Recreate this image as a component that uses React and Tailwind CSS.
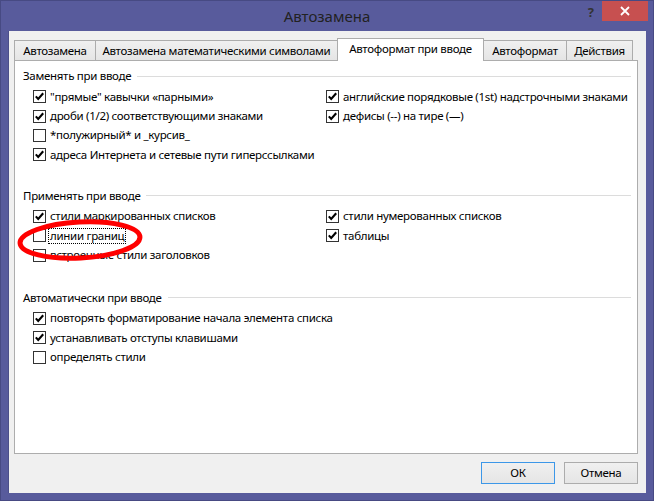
import React from "react";

const FONT = { fontFamily: '"Noto Sans", "Open Sans", sans-serif' };

function Box({ checked }) {
  return (
    <span className="w-[13px] h-[13px] border border-[#333333] bg-white flex items-center justify-center shrink-0">
      {checked && (
        <svg width="11" height="11" viewBox="0 0 11 11">
          <path d="M1.8 5.4 L4.2 8 L9.2 2.2" stroke="#000" strokeWidth="2.1" fill="none" />
        </svg>
      )}
    </span>
  );
}

function Item({ checked, label, focus }) {
  if (!label) return <div className="h-[19.4px]" />;
  return (
    <div className="h-[19.4px] flex items-center">
      <Box checked={checked} />
      <span
        className={
          "ml-[3px] leading-[14px] whitespace-nowrap " +
          (focus ? "outline-1 outline-dotted outline-[#000] outline-offset-[0px] px-px" : "px-px")
        }
      >
        {label}
      </span>
    </div>
  );
}

function Group({ title, rows, className }) {
  return (
    <div className={className}>
      <div className="flex items-center h-[16px]">
        <span className="whitespace-nowrap">{title}</span>
        <div className="flex-1 h-px bg-[#DCDCDC] ml-[6px]" />
      </div>
      <div className="mt-[3px] pl-[10px] grid grid-cols-[293px_1fr]">
        {rows.map((r, i) => (
          <React.Fragment key={i}>
            <Item {...r[0]} />
            <Item {...(r[1] || {})} />
          </React.Fragment>
        ))}
      </div>
    </div>
  );
}

const tabs = [
  { label: "Автозамена", w: "w-[82px]" },
  { label: "Автозамена математическими символами", w: "w-[243px]" },
  { label: "Автоформат при вводе", w: "w-[147px]", active: true },
  { label: "Автоформат", w: "w-[84px]" },
  { label: "Действия", w: "w-[67px]" },
];

export default function App() {
  return (
    <div
      className="w-[654px] h-[501px] bg-[#585B9C] border border-[#474A83] flex flex-col text-black overflow-hidden"
      style={FONT}
    >
      {/* Title bar */}
      <div className="h-[30px] grid grid-cols-[1fr_auto_1fr] items-start">
        <div />
        <div className="pt-[5px] text-[15px] leading-[20px] text-[#222222]">Автозамена</div>
        <div className="flex justify-end items-start pr-[5px]">
          <span className="mt-[3px] mr-[8px] text-[13px] font-bold leading-[16px] text-[#333333]">?</span>
          <div className="w-[46px] h-[20px] bg-[#C75050] flex items-center justify-center">
            <svg width="10" height="10" viewBox="0 0 10 10">
              <path d="M1 1 L9 9 M9 1 L1 9" stroke="#fff" strokeWidth="1.8" />
            </svg>
          </div>
        </div>
      </div>

      {/* Client area */}
      <div className="flex-1 mx-[7px] mb-[7px] bg-[#F0F0F0] border-l border-[#4C4F8A] flex flex-col pt-[7px] pl-[5px] pr-[8px] text-[11.5px] tracking-[-0.3px]">
        {/* Tabs */}
        <div className="flex items-end h-[22px] relative z-10">
          {tabs.map((t, i) =>
            t.active ? (
              <div
                key={i}
                className={
                  t.w +
                  " -ml-px h-[23px] -mb-px bg-white border border-b-0 border-[#ACACAC] flex items-center justify-center whitespace-nowrap pb-[2px]"
                }
              >
                {t.label}
              </div>
            ) : (
              <div
                key={i}
                className={
                  t.w +
                  (i === 0 ? "" : " -ml-px") +
                  " h-[20px] bg-gradient-to-b from-[#F0F0F0] to-[#E5E5E5] border border-b-0 border-[#ACACAC] flex items-center justify-center whitespace-nowrap"
                }
              >
                {t.label}
              </div>
            )
          )}
        </div>

        {/* Panel */}
        <div className="h-[394px] bg-white border border-[#ADADAD] pt-[7px] pl-[8px] pr-[6px] relative">
          <Group
            title="Заменять при вводе"
            rows={[
              [
                { checked: true, label: "\"прямые\" кавычки «парными»" },
                { checked: true, label: "английские порядковые (1st) надстрочными знаками" },
              ],
              [
                { checked: true, label: "дроби (1/2) соответствующими знаками" },
                { checked: true, label: "дефисы (--) на тире (—)" },
              ],
              [{ checked: false, label: "*полужирный* и _курсив_" }],
              [{ checked: true, label: "адреса Интернета и сетевые пути гиперссылками" }],
            ]}
          />
          <Group
            className="mt-[23px]"
            title="Применять при вводе"
            rows={[
              [
                { checked: true, label: "стили маркированных списков" },
                { checked: true, label: "стили нумерованных списков" },
              ],
              [
                { checked: false, label: "линии границ", focus: true },
                { checked: true, label: "таблицы" },
              ],
              [{ checked: false, label: "встроенные стили заголовков" }],
            ]}
          />
          <Group
            className="mt-[25px]"
            title="Автоматически при вводе"
            rows={[
              [{ checked: true, label: "повторять форматирование начала элемента списка" }],
              [{ checked: true, label: "устанавливать отступы клавишами" }],
              [{ checked: false, label: "определять стили" }],
            ]}
          />

          {/* red annotation ellipse */}
          <svg
            className="absolute left-[0px] top-[150px] pointer-events-none"
            width="140"
            height="52"
            viewBox="0 0 140 52"
          >
            <ellipse
              cx="65"
              cy="29"
              rx="60"
              ry="18"
              transform="rotate(-3 65 29)"
              fill="none"
              stroke="#FF0000"
              strokeWidth="5"
            />
          </svg>
        </div>

        {/* Buttons */}
        <div className="flex justify-end gap-[9px] mt-[8px]">
          <button className="w-[74px] h-[22px] border border-[#3C97E8] bg-gradient-to-b from-[#F0F0F0] to-[#E5E5E5] flex items-center justify-center">
            ОК
          </button>
          <button className="w-[74px] h-[22px] border border-[#ACACAC] bg-gradient-to-b from-[#F0F0F0] to-[#E5E5E5] flex items-center justify-center">
            Отмена
          </button>
        </div>
      </div>
    </div>
  );
}
